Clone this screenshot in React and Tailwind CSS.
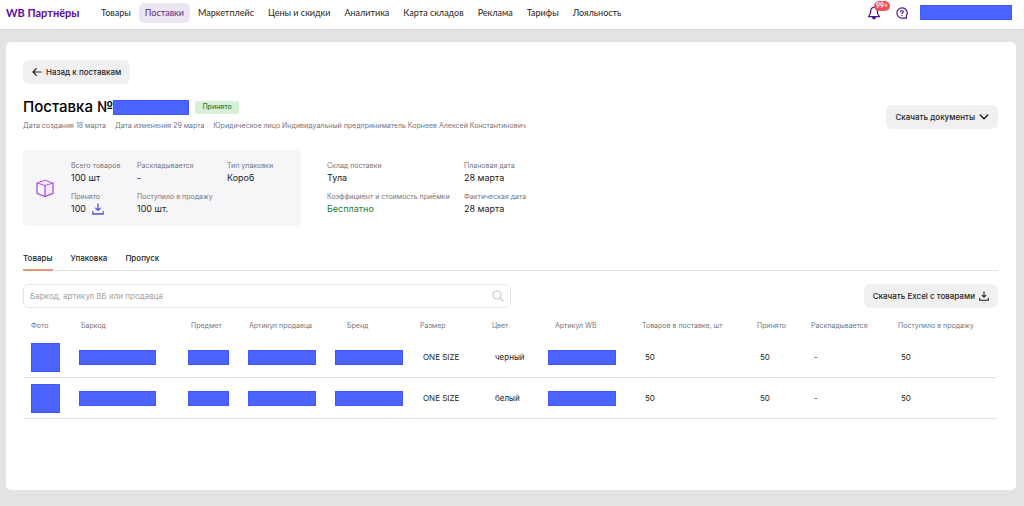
import React from "react";

const NAV = [
  "Товары",
  "Поставки",
  "Маркетплейс",
  "Цены и скидки",
  "Аналитика",
  "Карта складов",
  "Реклама",
  "Тарифы",
  "Лояльность",
];

const COLUMNS = [
  { title: "Фото", col: "w-[52px]", head: "pl-2", mask: "w-[29px] h-[29px]", cell: "pl-2" },
  { title: "Баркод", col: "w-[110px]", head: "pl-1.5", mask: "w-[77px] h-[15px]", cell: "pl-1" },
  { title: "Предмет", col: "w-[58px]", head: "pl-1.5", mask: "w-[41px] h-[15px]", cell: "pl-[3px]" },
  { title: "Артикул продавца", col: "w-[86px]", head: "pl-1.5", mask: "w-[68px] h-[15px]", cell: "pl-[5px]" },
  { title: "Бренд", col: "w-[85px]", head: "pl-[18px]", mask: "w-[68px] h-[15px]", cell: "pl-1.5" },
  { title: "Размер", col: "w-[72px]", head: "pl-1.5", field: "size" },
  { title: "Цвет", col: "w-[57px]", head: "pl-1.5", field: "color" },
  { title: "Артикул WB", col: "w-[93px]", head: "pl-3", mask: "w-[68px] h-[15px]", cell: "pl-[5px]" },
  { title: "Товаров в поставке, шт", col: "w-[115px]", head: "pl-1.5", field: "total" },
  { title: "Принято", col: "w-[54px]", head: "pl-1.5", field: "accepted" },
  { title: "Раскладывается", col: "w-[87px]", head: "pl-1.5", field: "sorting" },
  { title: "Поступило в продажу", col: "w-[106px]", head: "pl-1.5", field: "onSale" },
];

const ROWS = [
  { size: "ONE SIZE", color: "черный", total: "50", accepted: "50", sorting: "-", onSale: "50" },
  { size: "ONE SIZE", color: "белый", total: "50", accepted: "50", sorting: "-", onSale: "50" },
];

function Mask({ className }) {
  return <span className={`block shrink-0 border border-[#4156ff] bg-[#4b63ff] ${className}`} />;
}

function BellIcon() {
  return (
    <svg className="size-[14px]" viewBox="0 0 14 14" fill="none" stroke="#4a1a8c" strokeWidth="1.3" strokeLinejoin="round" strokeLinecap="round">
      <path d="M7 1.4C4.9 1.4 3.8 3 3.8 4.8c0 2.7-.5 3.9-2.3 5.8h11c-1.8-1.9-2.3-3.1-2.3-5.8C10.2 3 9.1 1.4 7 1.4Z" />
      <path d="M5.6 11.4c.2.9.7 1.4 1.4 1.4s1.2-.5 1.4-1.4Z" fill="#4a1a8c" />
    </svg>
  );
}

function HelpIcon() {
  return (
    <svg className="size-[12px]" viewBox="0 0 12 12" fill="none" stroke="#4a1a8c" strokeWidth="1.2" strokeLinecap="round" strokeLinejoin="round">
      <path d="M6 .9a5.1 5.1 0 1 0 0 10.2h4.6L10.2 9A5.1 5.1 0 0 0 6 .9Z" />
      <path d="M4.7 4.8c0-.8.6-1.3 1.3-1.3s1.3.5 1.3 1.2c0 .9-1.3 1-1.3 1.9" />
      <path d="M6 8.4v.1" />
    </svg>
  );
}

function BoxIcon() {
  return (
    <svg className="size-[18px] shrink-0" viewBox="0 0 18 18" fill="none" strokeWidth="1.1" strokeLinejoin="round">
      <path d="M9 6.6v10.8l8-3V4Z" fill="#f6e6ff" />
      <path d="M1 4 9 1.2 17 4 9 6.6Z" stroke="#c65bf0" />
      <path d="M1 4v10.4l8 3 8-3V4M9 6.6v10.8" stroke="#9a35dc" />
    </svg>
  );
}

function DownloadIcon({ className }) {
  return (
    <svg className={className} viewBox="0 0 12 12" fill="none" stroke="currentColor" strokeWidth="1.3" strokeLinecap="round" strokeLinejoin="round">
      <path d="M6 .8v6.4M3.7 5.2 6 7.4l2.3-2.2M.8 8.6v2.4h10.4V8.6" />
    </svg>
  );
}

function Stat({ label, children, tone = "text-[#1c1c1e]" }) {
  return (
    <div>
      <dt className="whitespace-nowrap text-[7px] leading-[10px] text-[#75757c]">{label}</dt>
      <dd className={`flex h-[14px] items-center gap-1.5 whitespace-nowrap text-[9px] ${tone}`}>{children}</dd>
    </div>
  );
}

export default function App() {
  return (
    <div className="flex min-h-screen flex-col bg-[#e3e3e3] font-['Inter','Liberation_Sans',sans-serif] text-[8px] text-[#242424]">
      <header className="flex h-[30px] items-center border-b border-[#d6d6d6] bg-white pr-3 pl-1.5 [font-family:Lato,'Open_Sans',sans-serif]">
        <a href="#home" className="w-[89px] whitespace-nowrap pb-1 text-[11px] leading-4 font-bold text-[#5b0aa5]">
          WB Партнёры
        </a>
        <nav className="flex gap-0.5 pb-1">
          {NAV.map((name) => (
            <a
              key={name}
              href="#nav"
              className={`flex h-5 items-center whitespace-nowrap rounded-[5px] px-1.5 text-[9px] ${
                name === "Поставки" ? "bg-[#ece6f3] text-[#5a2a86]" : "text-[#242424]"
              }`}
            >
              {name}
            </a>
          ))}
        </nav>
        <div className="ml-auto flex items-center gap-[12px] pb-1">
          <button type="button" aria-label="Уведомления" className="relative mr-[3px]">
            <BellIcon />
            <span className="absolute -top-[5px] left-[7px] flex h-[10px] items-center rounded-full bg-[#f0525a] px-[2px] text-[7px] font-bold text-white">
              99+
            </span>
          </button>
          <button type="button" aria-label="Помощь">
            <HelpIcon />
          </button>
          <Mask className="h-[15px] w-[92px]" />
        </div>
      </header>

      <main className="mt-3 mr-2 mb-4 ml-1.5 flex-1 rounded-[5px] bg-white pr-[18px] pl-[17px] pt-[18px]">
        <button type="button" className="flex h-6 items-center gap-1 rounded-md bg-[#f0f0f0] px-[9px] text-[8px] font-medium">
          <svg className="size-[10px]" viewBox="0 0 10 10" fill="none" stroke="#1c1c1e" strokeWidth="1.2" strokeLinecap="round" strokeLinejoin="round">
            <path d="M9 5H1.2M4.3 1.7 1 5l3.3 3.3" />
          </svg>
          Назад к поставкам
        </button>

        <div className="mt-3 flex items-end justify-between">
          <div>
            <div className="flex items-center">
              <h1 className="whitespace-nowrap text-[15px] leading-[22px] font-medium text-black">Поставка №</h1>
              <Mask className="h-[15px] w-[76px]" />
              <span className="ml-1.5 flex h-[13px] items-center rounded-[2px] bg-[#d8f0d8] px-[7px] text-[7px] font-medium text-[#2f7d3a]">
                Принято
              </span>
            </div>
            <p className="mt-[3px] flex gap-[9px] whitespace-nowrap text-[7px] leading-[10px] text-[#75757c]">
              <span>Дата создания 18 марта</span>
              <span>Дата изменения 29 марта</span>
              <span>Юридическое лицо Индивидуальный предприниматель Корнеев Алексей Константинович</span>
            </p>
          </div>
          <div className="pb-0.5">
            <button type="button" className="flex h-6 items-center gap-1 rounded-md bg-[#f0f0f0] px-[9px] text-[8px] font-medium">
              Скачать документы
              <svg className="size-[10px]" viewBox="0 0 10 10" fill="none" stroke="#1c1c1e" strokeWidth="1.4" strokeLinecap="round" strokeLinejoin="round">
                <path d="M1.2 3 5 6.8 8.8 3" />
              </svg>
            </button>
          </div>
        </div>

        <section className="mt-[19px] flex gap-[26px]">
          <div className="flex h-[76px] w-[278px] items-center gap-[17px] rounded-[5px] bg-[#f6f6f9] pl-[13px]">
            <BoxIcon />
            <dl className="grid grid-cols-[66px_90px_auto] gap-y-[7px]">
              <Stat label="Всего товаров">100 шт</Stat>
              <Stat label="Раскладывается">-</Stat>
              <Stat label="Тип упаковки">Короб</Stat>
              <Stat label="Принято">
                100
                <button type="button" aria-label="Скачать" className="text-[#4a58cf]">
                  <DownloadIcon className="size-[12px]" />
                </button>
              </Stat>
              <Stat label="Поступило в продажу">100 шт.</Stat>
            </dl>
          </div>
          <dl className="grid grid-cols-[137px_auto] content-center gap-y-[7px]">
            <Stat label="Склад поставки">Тула</Stat>
            <Stat label="Плановая дата">28 марта</Stat>
            <Stat label="Коэффициент и стоимость приёмки" tone="text-[#23803a]">Бесплатно</Stat>
            <Stat label="Фактическая дата">28 марта</Stat>
          </dl>
        </section>

        <div role="tablist" className="mt-6 flex gap-[18px] border-b border-[#e3e3e3]">
          {["Товары", "Упаковка", "Пропуск"].map((name, i) => (
            <button
              key={name}
              type="button"
              role="tab"
              aria-selected={i === 0}
              className={`-mb-px flex h-[21px] items-start border-b-2 pt-[3px] text-[8px] leading-[11px] font-medium ${
                i === 0 ? "border-[#e8966f]" : "border-transparent"
              }`}
            >
              {name}
            </button>
          ))}
        </div>

        <div className="mt-[13px] flex items-center justify-between">
          <label className="flex h-6 w-1/2 items-center rounded-[5px] border border-[#e9e9e9] px-[6px]">
            <input
              type="search"
              aria-label="Поиск"
              placeholder="Баркод, артикул ВБ или продавца"
              className="min-w-0 flex-1 text-[8px] outline-none placeholder:text-[#a3a3a8]"
            />
            <svg className="size-[12px]" viewBox="0 0 12 12" fill="none" stroke="#c4c4c8" strokeWidth="1.1" strokeLinecap="round">
              <circle cx="5" cy="5" r="4" />
              <path d="m8 8 3.2 3.2" />
            </svg>
          </label>
          <button type="button" className="flex h-6 items-center gap-1 rounded-md bg-[#f0f0f0] px-[9px] text-[8px] font-medium">
            Скачать Excel с товарами
            <DownloadIcon className="size-[10px] text-[#1c1c1e]" />
          </button>
        </div>

        <table className="mt-[5px] w-full table-fixed border-separate border-spacing-0 text-left">
          <colgroup>
            {COLUMNS.map((c) => (
              <col key={c.title} className={c.col} />
            ))}
          </colgroup>
          <thead>
            <tr className="h-6">
              {COLUMNS.map((c) => (
                <th key={c.title} className={`whitespace-nowrap pt-0.5 text-[7px] font-normal text-[#75757c] ${c.head}`}>
                  {c.title}
                </th>
              ))}
            </tr>
          </thead>
          <tbody>
            {ROWS.map((row, i) => (
              <tr key={i} className="h-[41px]">
                {COLUMNS.map((c) => (
                  <td
                    key={c.title}
                    className={`border-b border-[#e0e0e0] text-[8px] whitespace-nowrap first:rounded-bl-[3px] last:rounded-br-[3px] ${c.cell || "pl-[9px]"}`}
                  >
                    {c.field ? row[c.field] : <Mask className={c.mask} />}
                  </td>
                ))}
              </tr>
            ))}
          </tbody>
        </table>
      </main>
    </div>
  );
}
